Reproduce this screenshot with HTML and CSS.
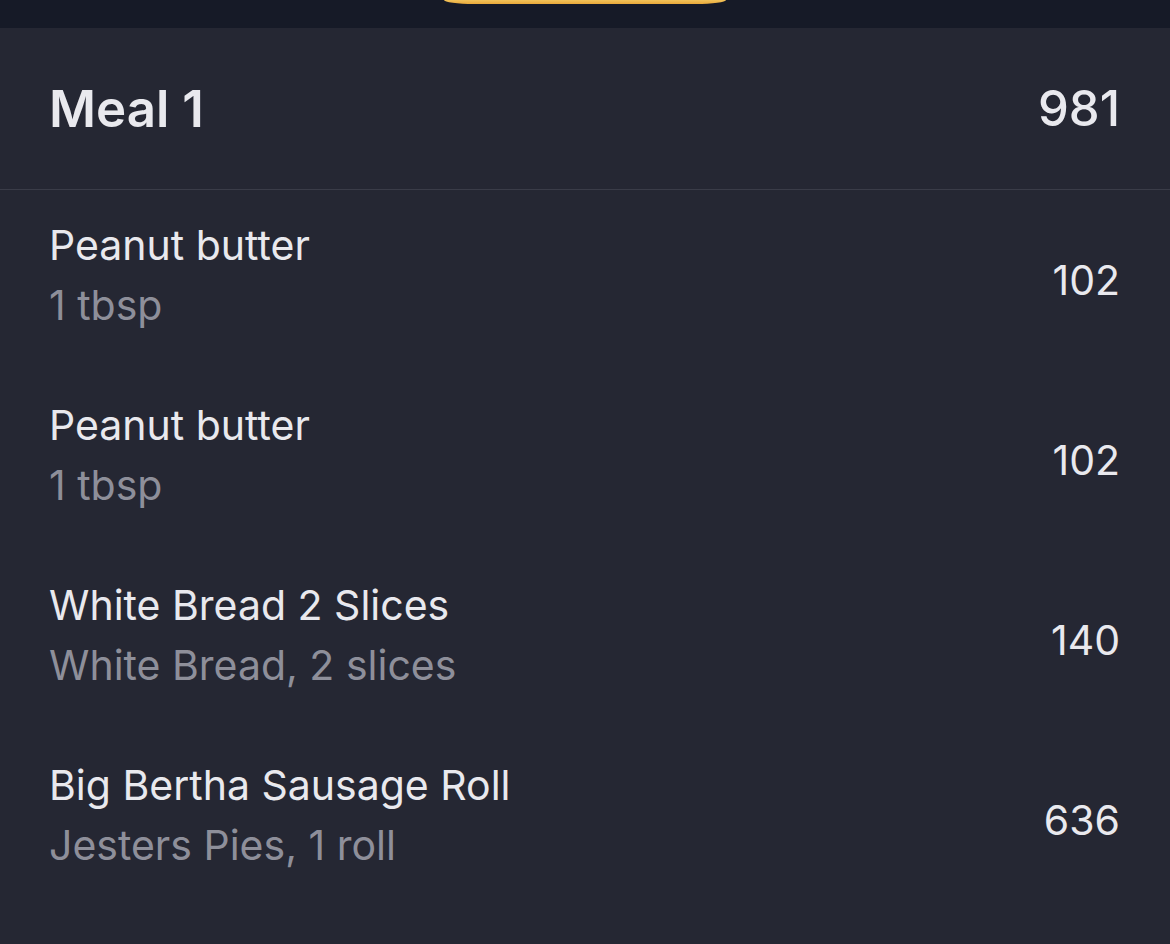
FILE: index.html
```html
<!DOCTYPE html>
<html>
<head>
    <title>Meal 1</title>
    <link rel="stylesheet" href="styles.css">
</head>
<body>
    <div class="top-bar">
        <div class="pill"></div>
    </div>
    <div class="meal-header">
        <span class="meal-title">Meal 1</span>
        <span class="meal-total">981</span>
    </div>
    <div class="food-list">
        <div class="food-row">
            <div class="food-info">
                <div class="food-name">Peanut butter</div>
                <div class="food-detail">1 tbsp</div>
            </div>
            <div class="food-cals">102</div>
        </div>
        <div class="food-row">
            <div class="food-info">
                <div class="food-name">Peanut butter</div>
                <div class="food-detail">1 tbsp</div>
            </div>
            <div class="food-cals">102</div>
        </div>
        <div class="food-row">
            <div class="food-info">
                <div class="food-name">White Bread 2 Slices</div>
                <div class="food-detail">White Bread, 2 slices</div>
            </div>
            <div class="food-cals">140</div>
        </div>
        <div class="food-row">
            <div class="food-info">
                <div class="food-name">Big Bertha Sausage Roll</div>
                <div class="food-detail">Jesters Pies, 1 roll</div>
            </div>
            <div class="food-cals">636</div>
        </div>
    </div>
</body>
</html>
```

FILE: styles.css
```css
body {
    margin: 0;
    background: #252733;
    font-family: Inter, "Noto Sans", sans-serif;
    color: #e9e9ee;
}
.top-bar {
    height: 28px;
    background: #161a27;
    display: flex;
    justify-content: center;
}
.pill {
    width: 282px;
    height: 4px;
    background: linear-gradient(#f2c35a, #e9a93a);
    border-radius: 0 0 30px 30px / 0 0 4px 4px;
}
.meal-header {
    height: 161px;
    padding: 0 50px 0 49px;
    display: flex;
    justify-content: space-between;
    align-items: center;
    border-bottom: 1px solid #3a3c48;
}
.meal-title {
    font-size: 51px;
    font-weight: 600;
}
.meal-total {
    font-size: 49px;
    font-weight: 500;
}
.food-row {
    height: 180px;
    padding: 0 50px 0 49px;
    display: flex;
    justify-content: space-between;
    align-items: center;
}
.food-info {
    line-height: 60px;
    font-size: 41px;
    padding-bottom: 10px;
}
.food-detail {
    color: #8e8f9a;
}
.food-cals {
    font-size: 41px;
}
```
